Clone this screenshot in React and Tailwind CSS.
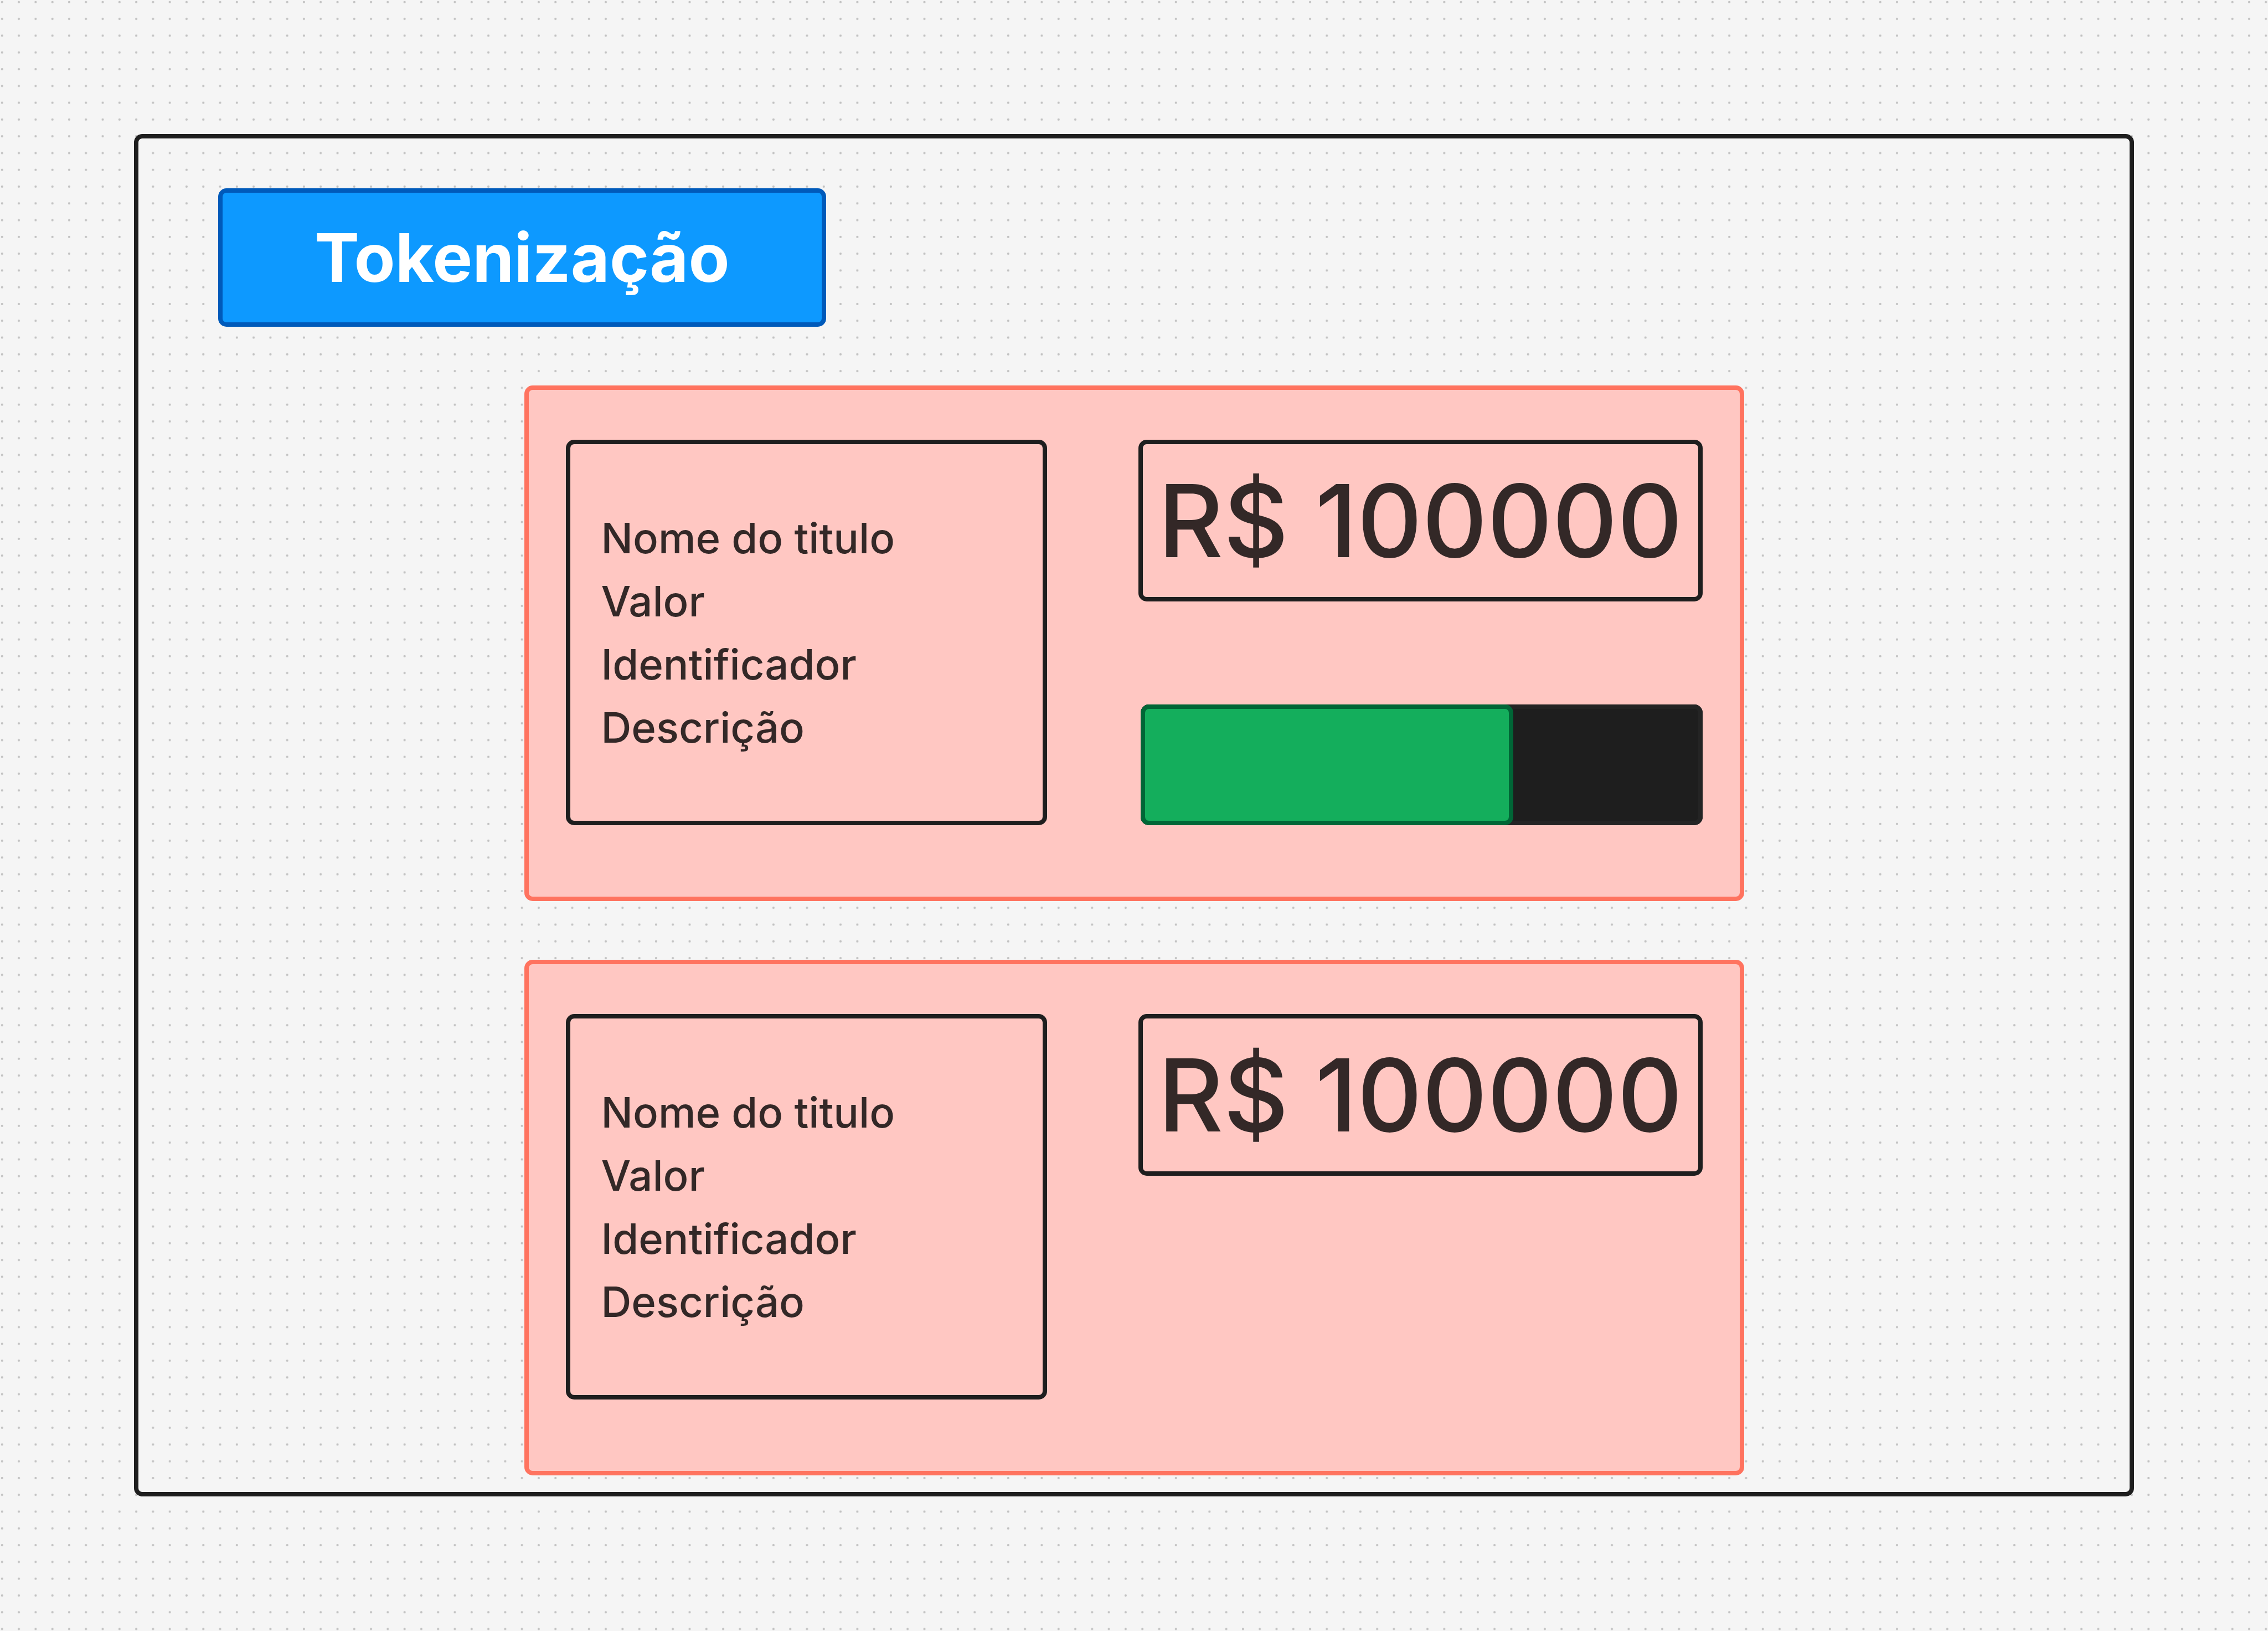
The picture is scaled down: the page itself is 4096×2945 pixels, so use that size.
const titles = [
  { id: 1, amount: 'R$ 100000', progress: 66.4 },
  { id: 2, amount: 'R$ 100000' },
];

const fields = ['Nome do titulo', 'Valor', 'Identificador', 'Descrição'];

function DotGrid() {
  return (
    <svg
      aria-hidden="true"
      className="absolute inset-0 -z-10 h-full w-full"
      viewBox="0 0 4328 3112"
      preserveAspectRatio="xMinYMin slice"
    >
      <defs>
        <pattern id="dots" width="32" height="32" patternUnits="userSpaceOnUse">
          <circle cx="4" cy="4" r="2.2" fill="#c2c2c2" />
        </pattern>
      </defs>
      <rect width="4328" height="3112" fill="url(#dots)" />
    </svg>
  );
}

function Progress({ value }) {
  return (
    <div
      role="progressbar"
      aria-label="Progresso"
      aria-valuenow={value}
      aria-valuemin={0}
      aria-valuemax={100}
      className="ml-1 h-[218px] rounded-[15px] bg-[#1e1e1e] shadow-[inset_0_0_0_8px_#242424]"
    >
      <div
        className="h-full rounded-[15px] border-8 border-[#006636] bg-[#14ae5c]"
        style={{ width: `${value}%` }}
      />
    </div>
  );
}

function TitleCard({ amount, progress }) {
  return (
    <article className="mx-auto grid w-full max-w-[2203px] grid-cols-[869fr_1019fr] gap-[165px] rounded-[15px] border-8 border-[#ff735f] bg-[#ffc7c2] px-[67px] pt-[90px] pb-[129px] font-medium text-black/80">
      <ul className="flex h-[696px] flex-col justify-center rounded-[15px] border-8 border-[#1e1e1e] px-[56px] text-[76px] leading-[114px]">
        {fields.map((field) => (
          <li key={field}>{field}</li>
        ))}
      </ul>
      <div className="flex flex-col justify-between">
        <p className="flex h-[292px] items-center justify-center rounded-[15px] border-8 border-[#1e1e1e] text-[182px] leading-none whitespace-nowrap">
          {amount}
        </p>
        {progress !== undefined && <Progress value={progress} />}
      </div>
    </article>
  );
}

export default function App() {
  return (
    <div className="relative isolate min-h-screen bg-[#f5f5f5] p-[242px] font-['Inter',sans-serif]">
      <DotGrid />
      <main className="flex flex-col gap-[106px] rounded-[15px] border-8 border-[#1e1e1e] pt-[90px] pb-[30px]">
        <h1 className="ml-[144px] flex h-[250px] w-[1098px] items-center justify-center rounded-[15px] border-8 border-[#005aba] bg-[#0d99ff] text-[121px] leading-none font-bold text-white">
          Tokenização
        </h1>
        {titles.map((title) => (
          <TitleCard key={title.id} amount={title.amount} progress={title.progress} />
        ))}
      </main>
    </div>
  );
}
